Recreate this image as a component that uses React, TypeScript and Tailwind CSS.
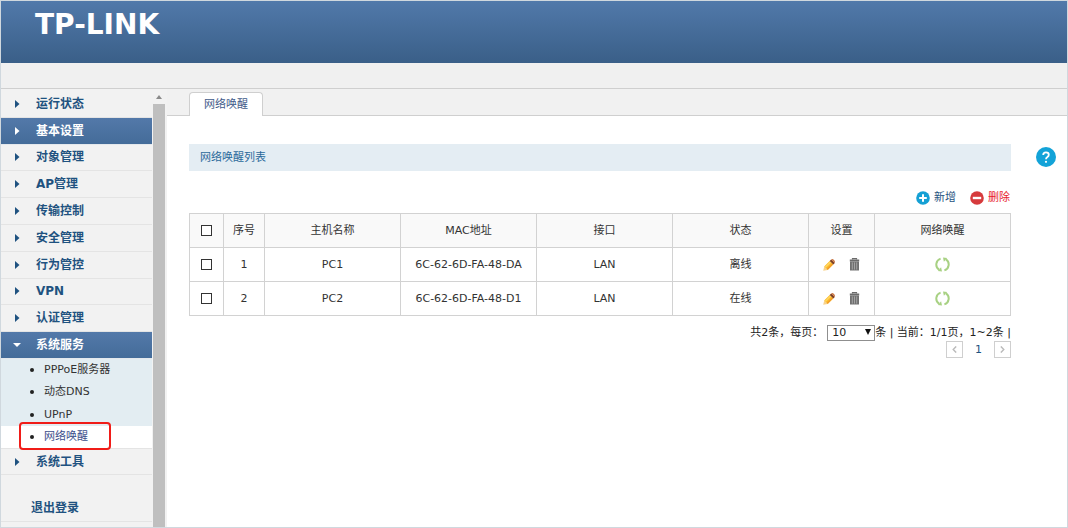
import React, { useState } from "react";

type MenuItem = { label: string; state?: "active" | "open" };

const menu: MenuItem[] = [
  { label: "运行状态" },
  { label: "基本设置", state: "active" },
  { label: "对象管理" },
  { label: "AP管理" },
  { label: "传输控制" },
  { label: "安全管理" },
  { label: "行为管控" },
  { label: "VPN" },
  { label: "认证管理" },
  { label: "系统服务", state: "open" },
];

const services = ["PPPoE服务器", "动态DNS", "UPnP", "网络唤醒"];

const hosts = [
  { id: 1, name: "PC1", mac: "6C-62-6D-FA-48-DA", port: "LAN", status: "离线" },
  { id: 2, name: "PC2", mac: "6C-62-6D-FA-48-D1", port: "LAN", status: "在线" },
];

function Caret({ down = false }: { down?: boolean }) {
  return (
    <svg viewBox="0 0 8 8" className="h-2 w-2 shrink-0" fill="currentColor" aria-hidden="true">
      <path d={down ? "M0 2h8L4 6z" : "M2 0v8l4.5-4z"} />
    </svg>
  );
}

function MenuRow({ label, state }: MenuItem) {
  return (
    <li className={state ? "border-b border-[#e4e8ec] bg-linear-to-b from-[#5379a9] to-[#446c99]" : "border-b border-[#e4e4e4]"}>
      <a
        href="#"
        className={
          state
            ? "flex h-full items-center gap-[15px] pl-3 text-white"
            : "flex h-full items-center gap-[15px] pl-3 text-[#1f5280]"
        }
      >
        <Caret down={state === "open"} />
        {label}
      </a>
    </li>
  );
}

function AddIcon() {
  return (
    <svg viewBox="0 0 14 14" className="h-[14px] w-[14px]" aria-hidden="true">
      <circle cx="7" cy="7" r="6.8" fill="#15a0d4" />
      <path d="M7 3.2v7.6M3.2 7h7.6" stroke="#fff" strokeWidth="2" />
    </svg>
  );
}

function RemoveIcon() {
  return (
    <svg viewBox="0 0 14 14" className="h-[14px] w-[14px]" aria-hidden="true">
      <circle cx="7" cy="7" r="6.8" fill="#d63a3c" />
      <path d="M2.8 7h8.4" stroke="#fff" strokeWidth="2.4" />
    </svg>
  );
}

function PencilIcon() {
  return (
    <svg viewBox="0 0 12 12" className="h-3 w-3" aria-hidden="true">
      <path d="M0.2 11.8 1.2 7.4 4.8 11z" fill="#f8d28a" />
      <path d="M1.2 7.4 6.7 1.9l3.6 3.6L4.8 11z" fill="#fbb829" />
      <path d="M2.4 8.3 7.8 2.9" stroke="#ffd75e" strokeWidth="1.6" />
      <path d="M4.2 10.3 9.7 4.8" stroke="#f0982a" strokeWidth="1.2" />
      <path d="M6.7 1.9 8.2.4l3.6 3.6-1.5 1.5z" fill="#7d3f22" />
      <path d="M8.2.4Q9.6-.4 11 1t.8 3z" fill="#c9733f" />
    </svg>
  );
}

function TrashIcon() {
  return (
    <svg viewBox="0 0 11 13" className="h-[13px] w-[11px]" aria-hidden="true">
      <path d="M3.5 1.6V.6h4v1" fill="none" stroke="#6a6a6a" strokeWidth="1.2" />
      <path d="M.8 1.5h9.4v2H.8z" fill="#6b6b6b" />
      <path d="M1 3.5h9v9H1z" fill="#707070" />
      <path d="M3.3 4.4v7.2M5.5 4.4v7.2M7.7 4.4v7.2" stroke="#b0b0b0" strokeWidth=".8" />
    </svg>
  );
}

function WakeIcon() {
  return (
    <svg viewBox="0 0 15 15" className="h-[15px] w-[15px]" aria-hidden="true">
      <g fill="none" stroke="#a8d183" strokeWidth="2">
        <path d="M5.6 1.6A6.2 6.2 0 0 0 4 12.6" />
        <path d="M9.4 13.4A6.2 6.2 0 0 0 11 2.4" />
      </g>
      <path d="M2.8 14 7 14.4 6.1 10.2z" fill="#a8d183" />
      <path d="M12.2 1 8 .6 8.9 4.8z" fill="#a8d183" />
    </svg>
  );
}

function Check({ label }: { label: string }) {
  return (
    <input
      type="checkbox"
      aria-label={label}
      className="block mx-auto h-[11px] w-[11px] appearance-none border border-[#333] bg-white checked:bg-[#446c99]"
    />
  );
}

const cell = "border border-[#d2d2d2] p-0 text-center font-normal";

export default function App() {
  const [size, setSize] = useState("10");
  return (
    <div className="flex min-h-screen flex-col border border-[#d0d8de] bg-white font-['DejaVu_Sans','Noto_Sans_CJK_SC',sans-serif] text-[11px] leading-4 text-[#333]">
      <header className="h-[62px] bg-linear-to-b from-[#5179aa] to-[#3a5f88] pl-[34px] pt-2">
        <h1 className="text-[28px] leading-8 font-bold text-white">TP-LINK</h1>
      </header>
      <div className="h-[26px] border-b border-[#cfcfcf] bg-[#f0f0f0]" />

      <div className="flex flex-1">
        <nav className="flex w-[166px] shrink-0 bg-[#f2f2f2]" aria-label="主菜单">
          <div className="w-[151px] pt-0.5 text-xs leading-4 font-bold">
            <ul className="grid h-[268px] auto-rows-fr">
              {menu.map((m) => (
                <MenuRow key={m.label} {...m} />
              ))}
            </ul>
            <ul className="grid h-[89px] auto-rows-fr bg-[#e3edf2] text-[11px] font-normal">
              {services.map((s, i) => {
                const current = i === services.length - 1;
                return (
                  <li key={s} className={current ? "relative bg-white text-[#3c4f8c]" : "text-[#333]"}>
                    <a href="#" className="flex h-full items-center gap-[10px] pl-[29px]">
                      <span className="h-1 w-1 rounded-full bg-[#222]" />
                      {s}
                    </a>
                    {current && (
                      <span className="pointer-events-none absolute -top-1 left-[18px] h-[28px] w-[92px] rounded-sm border-2 border-[#f01c18]" />
                    )}
                  </li>
                );
              })}
            </ul>
            <ul>
              <li className="h-[27px] border-y border-[#e4e4e4]">
                <a href="#" className="flex h-full items-center gap-[15px] pl-3 text-[#1f5280]">
                  <Caret />
                  系统工具
                </a>
              </li>
            </ul>
            <a href="#" className="mt-[20px] flex h-[27px] items-center border-b border-[#e4e4e4] pl-[30px] text-[#1f5280]">
              退出登录
            </a>
          </div>
          <div className="flex flex-1 flex-col pl-px">
            <div className="flex h-[15px] w-3 items-center justify-center text-[#8a8a8a]">
              <svg viewBox="0 0 6 4" className="h-1 w-1.5" fill="currentColor" aria-hidden="true">
                <path d="M0 4 3 0l3 4z" />
              </svg>
            </div>
            <div className="w-3 flex-1 bg-[#bfbfbf]" />
          </div>
        </nav>

        <main className="min-w-0 flex-1">
          <div className="flex h-[27px] items-end border-b border-[#cfcfcf] bg-[#f1f1f1] pl-[22px]">
            <a href="#" className="-mb-px flex h-6 items-center rounded-t border border-b-0 border-[#cfcfcf] bg-white px-[14px] text-[#3f5b8a]">
              网络唤醒
            </a>
          </div>

          <div className="flex pl-[22px] pt-7">
            <section className="min-w-0 flex-1">
              <h2 className="flex h-[27px] items-center bg-[#e4edf3] pl-[11px] text-[#2b6a9b]">网络唤醒列表</h2>

              <div className="mt-[19px] flex h-[23px] items-start justify-end gap-[14px] pr-px">
                <button type="button" className="flex items-center gap-1 text-[#1f5280]">
                  <AddIcon />
                  新增
                </button>
                <button type="button" className="flex items-center gap-1 text-[#e8202a]">
                  <RemoveIcon />
                  删除
                </button>
              </div>

              <table className="w-full table-fixed border-collapse">
                <colgroup>
                  <col className="w-[34px]" />
                  <col className="w-[41px]" />
                  <col />
                  <col />
                  <col />
                  <col />
                  <col className="w-[66px]" />
                  <col />
                </colgroup>
                <thead>
                  <tr className="h-[34px] bg-[#f9f9f9]">
                    <th className={cell}><Check label="全选" /></th>
                    <th className={cell}>序号</th>
                    <th className={cell}>主机名称</th>
                    <th className={cell}>MAC地址</th>
                    <th className={cell}>接口</th>
                    <th className={cell}>状态</th>
                    <th className={cell}>设置</th>
                    <th className={cell}>网络唤醒</th>
                  </tr>
                </thead>
                <tbody>
                  {hosts.map((h) => (
                    <tr key={h.id} className="h-[34px]">
                      <td className={cell}><Check label={h.name} /></td>
                      <td className={cell}>{h.id}</td>
                      <td className={cell}>{h.name}</td>
                      <td className={cell}>{h.mac}</td>
                      <td className={cell}>{h.port}</td>
                      <td className={cell}>{h.status}</td>
                      <td className={cell}>
                        <div className="flex items-center justify-center gap-[14px]">
                          <button type="button" aria-label="编辑"><PencilIcon /></button>
                          <button type="button" aria-label="删除"><TrashIcon /></button>
                        </div>
                      </td>
                      <td className={cell}>
                        <button type="button" aria-label="网络唤醒" className="block mx-auto"><WakeIcon /></button>
                      </td>
                    </tr>
                  ))}
                </tbody>
              </table>

              <div className="mt-2 flex h-[17px] items-center justify-end text-[#222]">
                <label htmlFor="page-size" className="pr-1">共2条，每页：</label>
                <span className="relative flex">
                  <select
                    id="page-size"
                    value={size}
                    onChange={(e) => setSize(e.target.value)}
                    className="h-4 w-12 appearance-none border border-[#8f8f8f] bg-white pl-1 leading-3"
                  >
                    <option>10</option>
                    <option>20</option>
                    <option>50</option>
                  </select>
                  <svg viewBox="0 0 6 6" className="pointer-events-none absolute right-1 top-1 h-1.5 w-1.5" aria-hidden="true">
                    <path d="M0 0h6L3 6z" fill="#111" />
                  </svg>
                </span>
                <span>条 | 当前：1/1页，1~2条 |</span>
              </div>
              <div className="flex items-center justify-end text-[#1f5280]">
                <button type="button" aria-label="上一页" className="flex h-[17px] w-[17px] items-center justify-center border border-[#cfcfcf]">
                  <svg viewBox="0 0 5 7" className="h-[7px] w-[5px]" fill="none" stroke="#bbb" strokeWidth="1.4" aria-hidden="true">
                    <path d="M4.2.4 1.2 3.5l3 3.1" />
                  </svg>
                </button>
                <span className="w-[31px] text-center">1</span>
                <button type="button" aria-label="下一页" className="flex h-[17px] w-[17px] items-center justify-center border border-[#cfcfcf]">
                  <svg viewBox="0 0 5 7" className="h-[7px] w-[5px]" fill="none" stroke="#bbb" strokeWidth="1.4" aria-hidden="true">
                    <path d="M.8.4l3 3.1-3 3.1" />
                  </svg>
                </button>
              </div>
            </section>

            <aside className="w-14 shrink-0 pl-[25px] pt-[3px]">
              <button type="button" aria-label="帮助" className="block">
                <svg viewBox="0 0 20 20" className="h-5 w-5" aria-hidden="true">
                  <circle cx="10" cy="10" r="10" fill="#13a3d8" />
                  <path d="M7.2 8Q7.2 5.3 10 5.3t2.8 2.4Q12.8 9 11.4 10 10 10.9 10 12.3" fill="none" stroke="#fff" strokeWidth="1.8" />
                  <circle cx="10" cy="14.8" r="1.1" fill="#fff" />
                </svg>
              </button>
            </aside>
          </div>
        </main>
      </div>
    </div>
  );
}
